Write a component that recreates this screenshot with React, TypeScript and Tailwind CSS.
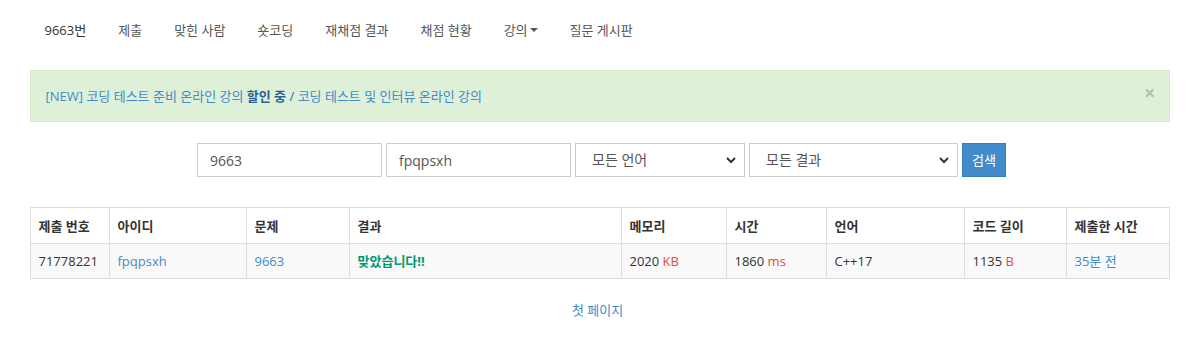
import React from "react";

const font = { fontFamily: "'Open Sans', 'Noto Sans CJK KR', sans-serif" };

function Chevron() {
  return (
    <svg width="10" height="7" viewBox="0 0 10 7" className="pointer-events-none absolute right-[9px] top-1/2 -translate-y-1/2">
      <path d="M1 1.5 L5 5.5 L9 1.5" stroke="#333" strokeWidth="2" fill="none" />
    </svg>
  );
}

export default function App() {
  const nav = ["9663번", "제출", "맞힌 사람", "숏코딩", "재채점 결과", "채점 현황"];
  const cols = [79, 137, 103, 272, 105, 100, 138, 102, 103];
  const heads = ["제출 번호", "아이디", "문제", "결과", "메모리", "시간", "언어", "코드 길이", "제출한 시간"];
  return (
    <div className="w-full bg-white text-[13px] leading-5 text-[#333]" style={font}>
      <div className="mx-auto w-[1170px] px-[15px]">
        <nav className="-ml-[1px] flex h-[60px] items-center">
          {nav.map((n, i) => (
            <a key={n} className={`px-[16px] ${i === 0 ? "text-[#333]" : "text-[#555]"}`}>{n}</a>
          ))}
          <a className="flex items-center px-[16px] text-[#555]">
            강의
            <span className="ml-[2px] inline-block h-0 w-0 border-x-[4px] border-t-[4px] border-x-transparent border-t-[#555]" />
          </a>
          <a className="px-[16px] text-[#555]">질문 게시판</a>
        </nav>

        <div className="mt-[10px] flex h-[52px] items-center justify-between border border-[#d6e9c6] bg-[#dff0d8] px-[15px]">
          <div className="text-[#428bca]">
            [NEW] 코딩 테스트 준비 온라인 강의 <b className="text-[#2a6496]">할인 중</b>{" "}
            <span className="text-[#2a6496]">/</span> 코딩 테스트 및 인터뷰 온라인 강의
          </div>
          <span className="-mr-[2px] mb-[6px] text-[20px] font-bold leading-none text-[#000] opacity-20">×</span>
        </div>

        <div className="mt-[21px] flex justify-center gap-[4px] pl-[4px]">
          <input
            readOnly
            value="9663"
            className="h-[34px] w-[185px] border border-[#ccc] px-[12px] text-[14px] text-[#555] outline-none"
          />
          <input
            readOnly
            value="fpqpsxh"
            className="h-[34px] w-[185px] border border-[#ccc] px-[12px] text-[14px] text-[#555] outline-none"
          />
          <div className="relative">
            <select className="h-[34px] w-[170px] appearance-none border border-[#ccc] bg-white px-[16px] text-[14px] text-[#555] outline-none">
              <option>모든 언어</option>
            </select>
            <Chevron />
          </div>
          <div className="relative">
            <select className="h-[34px] w-[209px] appearance-none border border-[#ccc] bg-white px-[16px] text-[14px] text-[#555] outline-none">
              <option>모든 결과</option>
            </select>
            <Chevron />
          </div>
          <button className="h-[34px] w-[44px] border border-[#357ebd] bg-[#428bca] text-[13px] text-white">검색</button>
        </div>

        <table className="mt-[30px] w-[1139px] table-fixed border-collapse border border-[#ddd]">
          <colgroup>
            {cols.map((w, i) => (
              <col key={i} style={{ width: w }} />
            ))}
          </colgroup>
          <thead>
            <tr className="h-[36px]">
              {heads.map((h) => (
                <th key={h} className="border border-[#ddd] px-[8px] text-left font-bold">{h}</th>
              ))}
            </tr>
          </thead>
          <tbody>
            <tr className="h-[35px] bg-[#f9f9f9]">
              <td className="border border-[#ddd] px-[8px]">71778221</td>
              <td className="border border-[#ddd] px-[8px] text-[#428bca]">fpqpsxh</td>
              <td className="border border-[#ddd] px-[8px] text-[#428bca]">9663</td>
              <td className="border border-[#ddd] px-[8px] font-bold text-[#009874]">맞았습니다!!</td>
              <td className="border border-[#ddd] px-[8px]">2020 <span className="text-[#e74c3c]">KB</span></td>
              <td className="border border-[#ddd] px-[8px]">1860 <span className="text-[#e74c3c]">ms</span></td>
              <td className="border border-[#ddd] px-[8px]">C++17</td>
              <td className="border border-[#ddd] px-[8px]">1135 <span className="text-[#e74c3c]">B</span></td>
              <td className="border border-[#ddd] px-[8px] text-[#428bca]">35분 전</td>
            </tr>
          </tbody>
        </table>

        <div className="mt-[21px] flex justify-center pr-[4px]">
          <a className="text-[#428bca]">첫 페이지</a>
        </div>
        <div className="h-[38px]" />
      </div>
    </div>
  );
}
